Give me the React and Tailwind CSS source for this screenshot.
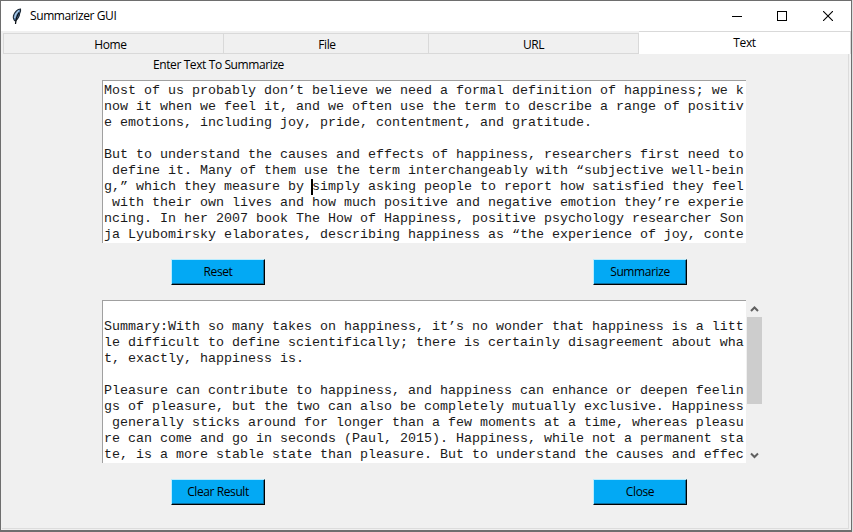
const SOURCE_LINES = [
  "Most of us probably don’t believe we need a formal definition of happiness; we k",
  "now it when we feel it, and we often use the term to describe a range of positiv",
  "e emotions, including joy, pride, contentment, and gratitude.",
  "",
  "But to understand the causes and effects of happiness, researchers first need to",
  " define it. Many of them use the term interchangeably with “subjective well-bein",
  "g,” which they measure by simply asking people to report how satisfied they feel",
  " with their own lives and how much positive and negative emotion they’re experie",
  "ncing. In her 2007 book The How of Happiness, positive psychology researcher Son",
  "ja Lyubomirsky elaborates, describing happiness as “the experience of joy, conte",
];

const SUMMARY_LINES = [
  "",
  "Summary:With so many takes on happiness, it’s no wonder that happiness is a litt",
  "le difficult to define scientifically; there is certainly disagreement about wha",
  "t, exactly, happiness is.",
  "",
  "Pleasure can contribute to happiness, and happiness can enhance or deepen feelin",
  "gs of pleasure, but the two can also be completely mutually exclusive. Happiness",
  " generally sticks around for longer than a few moments at a time, whereas pleasu",
  "re can come and go in seconds (Paul, 2015). Happiness, while not a permanent sta",
  "te, is a more stable state than pleasure. But to understand the causes and effec",
];

function FeatherIcon() {
  return (
    <svg width="12" height="17" viewBox="0 0 12 17" className="shrink-0">
      <path d="M9.500 1C6.500 1 3.300 4.600 2.400 8c-.5 1.800 0 3.200 1 4.500l1.200.3C7.300 10.500 8.500 8 8.600 5.800 9.600 4.200 9.900 2.600 9.500 1Z" fill="#5c86b4" stroke="#1b2733" strokeWidth="1.100" />
      <path d="M7.800 2.500C5.600 4.400 4.100 7 3.600 10" fill="none" stroke="#a9c9e6" strokeWidth="1.300" />
      <path d="M8 4.500C6 7.500 4.800 11 4.500 16" fill="none" stroke="#0c1117" strokeWidth="1.200" />
    </svg>
  );
}

function TitleBar() {
  return (
    <div className="flex h-[30px] items-center bg-white">
      <div className="flex grow items-center pl-[10px]">
        <FeatherIcon />
        <span className="ml-[7px] leading-[16px]">Summarizer GUI</span>
      </div>
      <svg width="10" height="10" className="mr-[35px]" shapeRendering="crispEdges">
        <path d="M0 5.500H10" stroke="#000" />
      </svg>
      <svg width="10" height="10" className="mr-[36px]" shapeRendering="crispEdges">
        <rect x=".5" y=".5" width="9" height="9" fill="none" stroke="#000" />
      </svg>
      <svg width="10" height="10" className="mr-[18px]">
        <path d="M0 0L10 10M10 0L0 10" stroke="#000" strokeWidth="1.100" />
      </svg>
    </div>
  );
}

function Tabs() {
  const tab = "mt-[2px] flex h-[21px] items-center justify-center border-y border-r border-[#d9d9d9] pt-[2px]";
  return (
    <div className="flex h-[23px] pl-[2px] leading-[16px]">
      <div className={tab + " w-[221px] border-l pr-[6px]"}>Home</div>
      <div className={tab + " w-[205px] pl-[2px]"}>File</div>
      <div className={tab + " w-[210px]"}>URL</div>
      <div className="flex h-[23px] w-[212px] items-center justify-center border-t border-r border-[#d9d9d9] bg-white">Text</div>
    </div>
  );
}

function TkButton({ children }) {
  return (
    <button className="flex h-[26px] w-[94px] items-center justify-center border border-t-[#b8ecff] border-r-black border-b-black border-l-[#b8ecff] bg-[#03a9f4] pb-px leading-[16px] tracking-[-0.4px] shadow-[inset_-1px_-1px_0_#0b6c9c]">
      {children}
    </button>
  );
}

function TextArea({ lines, caret }) {
  return (
    <div className="h-[163px] w-[644px] shrink-0 overflow-hidden border-t border-l border-[#a0a0a0] bg-white pt-[2px] pl-px font-['Liberation_Mono',monospace] text-[13.333px] leading-[16px] tracking-normal text-[#1a1a1a]">
      {lines.map((line, i) => (
        <div key={i} className="h-4 whitespace-pre">
          {caret && caret.row === i ? (
            <>
              {line.slice(0, caret.column)}
              <span className="-mr-px -ml-px inline-block h-[16px] w-[2px] bg-black align-top" />
              {line.slice(caret.column)}
            </>
          ) : (
            line
          )}
        </div>
      ))}
    </div>
  );
}

function Scrollbar() {
  return (
    <div className="ml-px flex h-[163px] w-[15px] flex-col items-center bg-[#f0f0f0]">
      <svg width="15" height="17" className="shrink-0">
        <path d="M4 11L7.500 7.500L11 11" fill="none" stroke="#606060" strokeWidth="2" />
      </svg>
      <div className="h-[87px] w-full bg-[#cdcdcd]" />
      <svg width="15" height="17" className="mt-auto shrink-0">
        <path d="M4 7.500L7.500 11L11 7.500" fill="none" stroke="#606060" strokeWidth="2" />
      </svg>
    </div>
  );
}

export default function App() {
  return (
    <div className="h-[532px] w-[853px] overflow-hidden bg-[#dedede] font-['Open_Sans',sans-serif] text-[12px] tracking-[-0.4px] text-black">
      <div className="flex h-[532px] w-[852px] flex-col border border-b-2 border-[#6e6e6e] bg-[#f0f0f0]">
        <TitleBar />
        <Tabs />
        <div className="mr-[2px] mb-px ml-px flex grow flex-col border-r border-b border-[#dcdcdc]">
          <div className="ml-[151px] h-[26px] pt-[3px] leading-[16px]">Enter Text To Summarize</div>
          <div className="pl-[100px]">
            <TextArea lines={SOURCE_LINES} caret={{ row: 6, column: 26 }} />
          </div>
          <div className="mt-[16px] flex gap-[328px] pl-[169px]">
            <TkButton>Reset</TkButton>
            <TkButton>Summarize</TkButton>
          </div>
          <div className="mt-[15px] flex pl-[100px]">
            <TextArea lines={SUMMARY_LINES} />
            <Scrollbar />
          </div>
          <div className="mt-[16px] flex gap-[328px] pl-[169px]">
            <TkButton>Clear Result</TkButton>
            <TkButton>Close</TkButton>
          </div>
        </div>
      </div>
    </div>
  );
}
